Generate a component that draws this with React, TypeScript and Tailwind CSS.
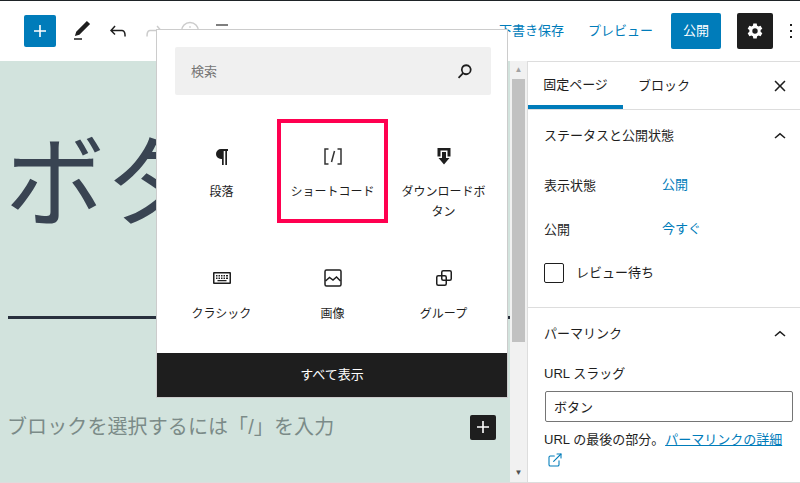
import { ExternalLink } from 'lucide-react';

const font = { fontFamily: '"Liberation Sans", "Noto Sans CJK JP", sans-serif' };

function Block({ icon, label, highlight }: { icon: React.ReactNode; label: React.ReactNode; highlight?: boolean }) {
    return (
        <div
            className={
                'flex h-[104px] w-[111px] flex-col items-center text-center text-[12px] leading-[20px] text-[#1e1e1e] ' +
                (highlight ? 'border-[4px] border-[#ff0050] pt-[21px]' : 'pt-[25px]')
            }
        >
            <div className="flex h-6 items-center justify-center">{icon}</div>
            <div className="mt-[14px]">{label}</div>
        </div>
    );
}

function Chevron() {
    return (
        <svg viewBox="0 0 24 24" className="mr-px h-6 w-6 fill-[#1e1e1e]">
            <path d="M6.5 13.4L12 8.8l5.500 4.600-1 1.100L12 10.800l-4.500 3.700z" />
        </svg>
    );
}

const iconClass = 'h-6 w-6 fill-[#1e1e1e]';
const strokeIconClass = 'h-6 w-6 fill-none stroke-[#1e1e1e] stroke-[1.5]';

export default function App() {
    return (
        <div style={font} className="relative flex h-[483px] w-[800px] flex-col overflow-hidden bg-white text-[#1e1e1e]">
            <div className="h-px shrink-0 bg-[#1e2327]" />
            <header className="flex h-[60px] shrink-0 items-center pl-6 pr-px">
                <button className="flex h-8 w-8 items-center justify-center rounded-[2px] bg-[#007cba]">
                    <svg viewBox="0 0 24 24" className="h-6 w-6 fill-white">
                        <path d="M18 11.200h-5.200V6h-1.600v5.200H6v1.600h5.200V18h1.600v-5.200H18z" />
                    </svg>
                </button>
                <svg viewBox="0 0 24 24" className="ml-[14px] h-6 w-6 fill-[#1e1e1e]">
                    <path d="M20.100 5.100L16.900 2 6.200 12.700l-1.300 4.400 4.500-1.300L20.100 5.100zM4 20.800h8v-1.500H4v1.500z" />
                </svg>
                <svg viewBox="0 0 24 24" className="ml-3 h-6 w-6 fill-[#1e1e1e]">
                    <path d="M18.300 11.700c-.6-.6-1.400-.9-2.300-.9H6.700l2.900-3.300-1.100-1-4.500 5L8.500 16l1-1-2.700-2.700H16c.5 0 .9.200 1.300.5 1 1 1 3.400 1 4.500v.3h1.500v-.2c0-1.500 0-4.300-1.500-5.700z" />
                </svg>
                <svg viewBox="0 0 24 24" className="ml-3 h-6 w-6 fill-[#ccc]">
                    <path d="M15.600 6.500l-1.100 1 2.900 3.300H8c-.9 0-1.700.3-2.300.9-1.400 1.500-1.400 4.200-1.400 5.700v.2h1.500v-.3c0-1.100 0-3.500 1-4.500.3-.3.700-.5 1.300-.5h9.200L14.300 15l1.100 1.100 4.500-4.600-4.300-5z" />
                </svg>
                <svg viewBox="0 0 24 24" className="ml-3 h-6 w-6 fill-none stroke-[#ccc] stroke-[1.5]">
                    <circle cx="12" cy="12" r="8.500" />
                    <path d="M12 7.300v1.400M12 11v6" />
                </svg>
                <svg viewBox="0 0 24 24" className="ml-2 h-6 w-6 fill-[#555]">
                    <path d="M6 5.200h12v1.600H6zM6 11.200h12v1.600H6zM6 17.200h12v1.600H6z" />
                </svg>
                <span className="ml-auto text-[13px] text-[#007cba]">下書き保存</span>
                <span className="ml-[24px] text-[13px] text-[#007cba]">プレビュー</span>
                <button className="ml-[18px] flex h-9 w-[50px] items-center justify-center rounded-[2px] bg-[#007cba] text-[13px] text-white">
                    公開
                </button>
                <button className="ml-4 flex h-9 w-9 items-center justify-center rounded-[2px] bg-[#1e1e1e]">
                    <svg viewBox="0 0 24 24" className="h-6 w-6 fill-white">
                        <path
                            fillRule="evenodd"
                            d="M10.300 4.500h3.400l.4 2.200c.5.200 1 .4 1.400.8l2.100-.8 1.700 3-1.700 1.400c.1.600.1 1.100 0 1.700l1.700 1.400-1.700 3-2.100-.8c-.4.300-.9.600-1.400.8l-.4 2.200h-3.400l-.4-2.200c-.5-.2-1-.5-1.400-.8l-2.100.8-1.700-3 1.700-1.400c-.1-.6-.1-1.100 0-1.700L4.700 9.700l1.700-3 2.100.8c.4-.4.9-.6 1.400-.8l.4-2.200zM12 9.300a2.700 2.700 0 100 5.400 2.700 2.700 0 000-5.400z"
                        />
                    </svg>
                </button>
                <svg viewBox="4 0 16 24" className="ml-[10px] h-6 w-4 fill-[#1e1e1e]">
                    <path d="M13 19h-2v-2h2v2zm0-6h-2v-2h2v2zm0-6h-2V5h2v2z" />
                </svg>
            </header>

            <div className="flex min-h-0 flex-1">
                <main className="w-[510px] shrink-0 overflow-hidden bg-[#d2e3dd] pl-2">
                    <h1 className="-ml-[3px] mt-[48px] h-[150px] whitespace-nowrap text-[100px] font-normal leading-[150px] text-[#394452]">
                        ボタン
                    </h1>
                    <div className="mt-[57px] h-[3px] bg-[#28303d]" />
                    <div className="mt-[93px] flex items-center justify-between pr-[14px]">
                        <span className="-ml-px text-[20px] tracking-[0.1px] text-[#7b8b88]">ブロックを選択するには「/」を入力</span>
                        <button className="flex h-[25px] w-[26px] items-center justify-center rounded-[2px] bg-[#1e1e1e]">
                            <svg viewBox="0 0 24 24" className="h-6 w-6 fill-white">
                                <path d="M18 11.200h-5.200V6h-1.600v5.200H6v1.600h5.200V18h1.600v-5.200H18z" />
                            </svg>
                        </button>
                    </div>
                </main>

                <div className="flex w-[18px] shrink-0 flex-col border-r border-[#ddd] bg-[#f1f1f1] px-[2px]">
                    <div className="flex h-[18px] items-center justify-center text-[8px] text-[#a3a3a3]">▲</div>
                    <div className="h-[263px] bg-[#c1c1c1]" />
                    <div className="mt-auto flex h-[18px] items-center justify-center text-[8px] text-[#505050]">▼</div>
                </div>

                <aside className="min-w-0 flex-1 border-t border-[#ddd] text-[13px]">
                    <div className="flex h-[48px] items-center border-b border-[#ddd]">
                        <div className="flex h-full w-[95px] items-center justify-center border-b-[4px] border-[#007cba] pt-[2px]">
                            固定ページ
                        </div>
                        <div className="ml-[15px]">ブロック</div>
                        <svg viewBox="0 0 24 24" className="ml-auto mr-2 h-6 w-6 fill-[#1e1e1e]">
                            <path d="M13.100 12l4.400-4.400-1.100-1.100-4.400 4.400-4.400-4.400-1.100 1.100 4.400 4.400-4.400 4.400 1.100 1.100 4.400-4.400 4.400 4.400 1.100-1.100z" />
                        </svg>
                    </div>

                    <section className="h-[198px] border-b border-[#ddd] pl-4 pr-[7px]">
                        <div className="flex h-[52px] items-center justify-between">
                            <span>ステータスと公開状態</span>
                            <Chevron />
                        </div>
                        <div className="mt-[14px] flex h-5 items-center">
                            <span className="w-[118px]">表示状態</span>
                            <span className="pb-[2px] text-[#007cba]">公開</span>
                        </div>
                        <div className="mt-[24px] flex h-5 items-center">
                            <span className="w-[118px]">公開</span>
                            <span className="pb-[2px] text-[#007cba]">今すぐ</span>
                        </div>
                        <label className="mt-[23px] flex items-center">
                            <span className="h-5 w-5 rounded-[2px] border border-[#1e1e1e]" />
                            <span className="ml-3">レビュー待ち</span>
                        </label>
                    </section>

                    <section className="pl-4 pr-[7px]">
                        <div className="flex h-[52px] items-center justify-between">
                            <span>パーマリンク</span>
                            <Chevron />
                        </div>
                        <div className="mt-1 leading-5">URL スラッグ</div>
                        <input
                            readOnly
                            value="ボタン"
                            className="ml-px mt-[7px] h-[31px] w-[248px] rounded-[2px] border border-[#757575] px-2 text-[13px] outline-none"
                        />
                        <p className="mt-[7px] leading-[21px]">
                            URL の最後の部分。
                            <span className="ml-px text-[#007cba] underline">パーマリンクの詳細</span>
                            <ExternalLink className="ml-[3px] inline h-4 w-4 align-[-3px] text-[#007cba]" strokeWidth={1.6} />
                        </p>
                    </section>
                </aside>
            </div>
            <div className="h-px shrink-0 bg-[#ddd]" />

            <div className="absolute left-[157px] top-[30px] flex h-[367px] w-[350px] flex-col bg-white shadow-[0_0_0_1px_#ccc]">
                <div className="ml-[18px] mr-4 mt-[17px] flex h-12 items-center justify-between rounded-[2px] bg-[#f0f0f0] pl-4 pr-4">
                    <span className="pt-px text-[13px] text-[#757575]">検索</span>
                    <svg viewBox="0 0 24 24" className="h-5 w-5 fill-[#1e1e1e]">
                        <path d="M13.500 4a6.500 6.500 0 00-5.100 10.500L3.500 19.400 5 20.900l4.900-4.900A6.500 6.500 0 1013.500 4zm0 2.200a4.300 4.300 0 110 8.600 4.300 4.300 0 010-8.600z" />
                    </svg>
                </div>
                <div className="mt-6 grid grid-cols-[111px_111px_111px] gap-y-[18px] pl-[9px]">
                    <Block
                        label="段落"
                        icon={
                            <svg viewBox="0 0 24 24" className={iconClass}>
                                <path d="M18 5H11a5 5 0 000 10h1v6h1.700V7h1.600v14H17V7h1z" />
                            </svg>
                        }
                    />
                    <Block
                        highlight
                        label="ショートコード"
                        icon={
                            <svg viewBox="0 0 24 24" className="h-6 w-6 fill-none stroke-[#333] stroke-[1.5]">
                                <path d="M7.500 5H4v15h3.500M16.500 5H20v15h-3.500M13.500 7l-3 11" />
                            </svg>
                        }
                    />
                    <Block
                        label={
                            <>
                                ダウンロードボ
                                <br />
                                タン
                            </>
                        }
                        icon={
                            <svg viewBox="0 0 24 24" className={iconClass}>
                                <path
                                    fillRule="evenodd"
                                    d="M5.500 4h13v8.500h-3V6.500h-7v6h-3zM10 8h4v6h3.500L12 20.500 6.500 14H10z"
                                />
                            </svg>
                        }
                    />
                    <Block
                        label="クラシック"
                        icon={
                            <svg viewBox="0 0 24 24" className={iconClass}>
                                <path
                                    fillRule="evenodd"
                                    d="M4 6h16a1 1 0 011 1v10a1 1 0 01-1 1H4a1 1 0 01-1-1V7a1 1 0 011-1zm.5 1.500v9h15v-9zM6 9h1.500v1.500H6zm2.500 0H10v1.500H8.500zm2.500 0h1.500v1.500H11zm2.500 0H15v1.500h-1.500zm2.500 0h2v1.500h-2zM6 11.500h1.500V13H6zm2.500 0H10V13H8.500zm2.500 0h1.500V13H11zm2.500 0H15V13h-1.500zm2.500 0h2V13h-2zM7.500 14h9v1.200h-9z"
                                />
                            </svg>
                        }
                    />
                    <Block
                        label="画像"
                        icon={
                            <svg viewBox="0 0 24 24" className={strokeIconClass}>
                                <rect x="4" y="4" width="16" height="16" rx="1.500" />
                                <path d="M4.500 15l4-3.500 3.500 2.500 3.500-3 4 4" />
                            </svg>
                        }
                    />
                    <Block
                        label="グループ"
                        icon={
                            <svg viewBox="0 0 24 24" className={strokeIconClass}>
                                <rect x="4.750" y="9.750" width="9.500" height="9.500" rx="1.500" />
                                <rect x="9.750" y="4.750" width="9.500" height="9.500" rx="1.500" />
                            </svg>
                        }
                    />
                </div>
                <div className="mt-auto flex h-11 items-center justify-center bg-[#1e1e1e] text-[13px] text-white">
                    すべて表示
                </div>
            </div>
        </div>
    );
}
